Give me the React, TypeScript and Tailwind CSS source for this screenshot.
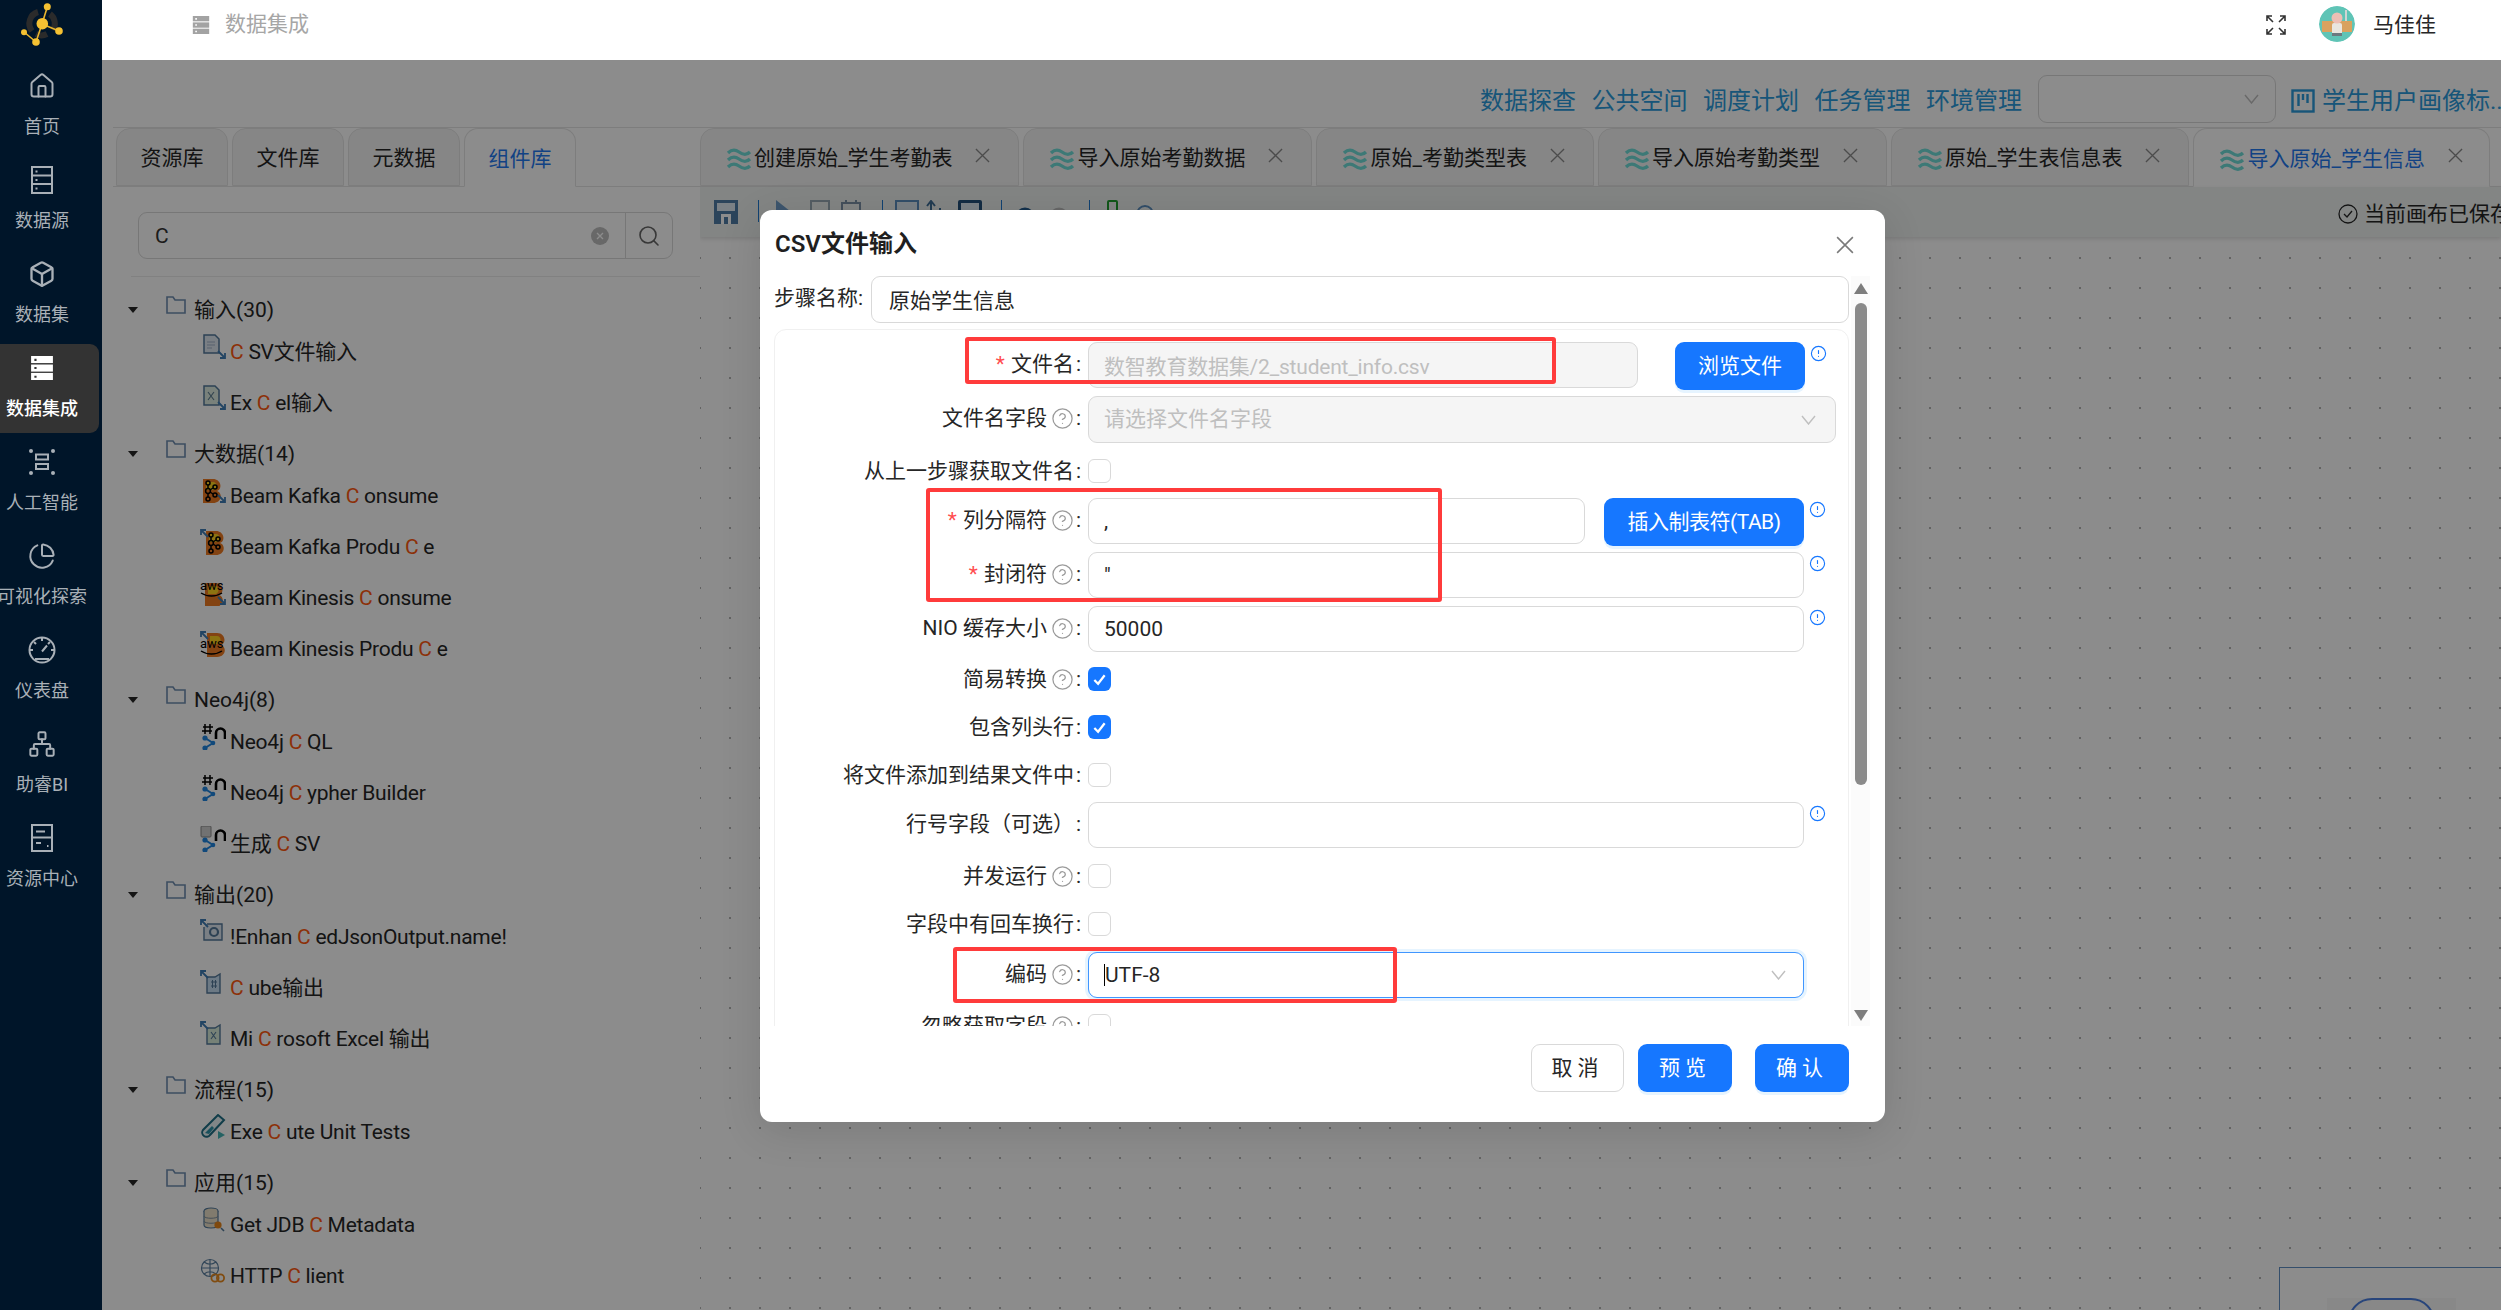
import type { ReactNode } from "react";
import { Box, ChartPie, CircleAlert, CircleHelp, Home, Network, Search } from "lucide-react";

function Cross({ className }: { className: string }) {
  return (
    <svg viewBox="0 0 16 16" className={className} fill="none" stroke="currentColor" strokeWidth="1.4">
      <path d="M1 1 15 15M15 1 1 15" />
    </svg>
  );
}

function Chevron() {
  return (
    <svg viewBox="0 0 15 10" className="h-[10px] w-[15px] shrink-0 text-[#bfbfbf]" fill="none" stroke="currentColor" strokeWidth="1.4">
      <path d="M1 1 7.5 9 14 1" />
    </svg>
  );
}

function Rows({ className, solid }: { className: string; solid?: boolean }) {
  const c = solid ? "#ffffff" : "#a3a3a3";
  return (
    <svg viewBox="0 0 22 24" className={className}>
      <rect x="1" y="1" width="20" height="6.5" fill={c} />
      <rect x="1" y="8.8" width="20" height="6.5" fill={c} />
      <rect x="1" y="16.5" width="20" height="6.5" fill={c} />
      <path d="M4 3.5h2v2H4zM4 11h2v2H4zM4 19h2v2H4z" fill={solid ? "#333333" : "#ffffff"} />
    </svg>
  );
}

function Logo() {
  return (
    <svg viewBox="0 0 102 60" className="h-[60px] w-[102px]">
      <path d="M32 31A12 12 0 0 1 38 12M50 14A12 12 0 0 1 53 30M47 34A12 12 0 0 1 36 34" fill="none" stroke="#2b2b2b" strokeWidth="6" />
      <path d="M42 24 47.3 7M42 24 59 31M42 24 36 42 24 32" fill="none" stroke="#e8b52e" strokeWidth="1.6" />
      <g fill="#f5c132">
        <circle cx="42.3" cy="23.7" r="5.8" />
        <circle cx="47.3" cy="6.7" r="3.5" />
        <circle cx="59" cy="31" r="3.8" />
        <circle cx="36" cy="42" r="3.8" />
        <circle cx="24" cy="32.3" r="3" />
      </g>
    </svg>
  );
}

const sideIcon = "h-[28px] w-[28px] text-[#a9b0b7]";

function SourceIcon() {
  return (
    <svg viewBox="0 0 28 28" className={sideIcon} fill="none" stroke="currentColor" strokeWidth="2">
      <rect x="4" y="1" width="20" height="26" />
      <path d="M4 9.5h20M4 18h20" />
      <path d="M7.5 5.5h2M7.5 14h2M7.5 22.5h2" />
    </svg>
  );
}

function AiIcon() {
  return (
    <svg viewBox="0 0 28 28" className={sideIcon} fill="none" stroke="currentColor" strokeWidth="2">
      <rect x="8" y="6.5" width="12" height="5" />
      <rect x="8" y="16" width="12" height="5" />
      <g fill="currentColor" stroke="none">
        <circle cx="3" cy="3" r="2" />
        <circle cx="25" cy="3" r="2" />
        <circle cx="3" cy="25" r="2" />
        <circle cx="25" cy="25" r="2" />
      </g>
    </svg>
  );
}

function CenterIcon() {
  return (
    <svg viewBox="0 0 28 28" className={sideIcon} fill="none" stroke="currentColor" strokeWidth="2">
      <rect x="4" y="1" width="20" height="26" />
      <path d="M4 13.5h20" />
      <path d="M8 7.5h9M8 19h5M19 22h1.5" />
    </svg>
  );
}

function DashIcon() {
  return (
    <svg viewBox="0 0 28 28" className={sideIcon} fill="none" stroke="currentColor" strokeWidth="2">
      <circle cx="14" cy="14" r="12.5" />
      <path d="M14 15.5 19 9.5M14 2v3M6 6l2 2M22 6l-2 2M2 14h3M26 14h-3M7 23h14" />
    </svg>
  );
}

const menu = [
  { label: "首页", icon: <Home className={sideIcon} strokeWidth={1.7} /> },
  { label: "数据源", icon: <SourceIcon /> },
  { label: "数据集", icon: <Box className={sideIcon} strokeWidth={2} /> },
  { label: "数据集成", icon: <Rows solid className="h-[28px] w-[24px]" />, active: true },
  { label: "人工智能", icon: <AiIcon /> },
  { label: "可视化探索", icon: <ChartPie className={sideIcon} strokeWidth={1.7} /> },
  { label: "仪表盘", icon: <DashIcon /> },
  { label: "助睿BI", icon: <Network className={sideIcon} strokeWidth={1.7} /> },
  { label: "资源中心", icon: <CenterIcon /> },
];

function Sidebar() {
  return (
    <aside className="flex w-[102px] shrink-0 flex-col bg-[#001529]">
      <div className="h-[62px]">
        <Logo />
      </div>
      {menu.map((m) => (
        <div
          key={m.label}
          className={
            m.active
              ? "mb-[5px] mr-[3px] flex h-[89px] flex-col items-center rounded-r-[9px] bg-[#333333] pr-[15px] pt-[10px]"
              : "mb-[5px] flex h-[89px] flex-col items-center pr-[18px] pt-[10px]"
          }
        >
          <div className="flex h-[28px] items-center justify-center">{m.icon}</div>
          <div
            className={
              m.active
                ? "mt-[14px] whitespace-nowrap text-[18px] font-medium leading-[26px] text-white"
                : "mt-[14px] whitespace-nowrap text-[18px] leading-[26px] text-[#a9b0b7]"
            }
          >
            {m.label}
          </div>
        </div>
      ))}
    </aside>
  );
}

function Avatar() {
  return (
    <svg viewBox="0 0 36 36" className="h-[36px] w-[36px] rounded-full">
      <circle cx="18" cy="18" r="18" fill="#5fc4b6" />
      <rect x="3" y="15" width="30" height="11" fill="#d9a25f" />
      <rect x="13" y="17" width="10" height="12" rx="2" fill="#e9e6df" />
      <rect x="13" y="27" width="10" height="3" fill="#6c7a80" />
      <circle cx="18" cy="12" r="5.5" fill="#eebfb4" />
      <rect x="26" y="4" width="2" height="11" fill="#cfd5d3" />
    </svg>
  );
}

function Header() {
  return (
    <header className="flex h-[60px] shrink-0 items-center bg-white pl-[90px] pr-[65px]">
      <Rows className="mb-[11px] h-[22px] w-[18px]" />
      <span className="mb-[13px] ml-[15px] text-[21px] leading-[30px] text-[#a6a6a6]">数据集成</span>
      <svg viewBox="0 0 20 20" className="mb-[10px] ml-auto h-[20px] w-[20px] text-[#333333]" fill="none" stroke="currentColor" strokeWidth="1.6">
        <path d="M7 7 1.5 1.5M1 6V1h5M13 7l5.5-5.5M14 1h5v5M7 13l-5.5 5.5M1 14v5h5M13 13l5.5 5.5M19 14v5h-5" />
      </svg>
      <div className="mb-[12px] ml-[33px]">
        <Avatar />
      </div>
      <span className="mb-[11px] ml-[18px] text-[21px] leading-[30px] text-[#262626]">马佳佳</span>
    </header>
  );
}

function TopNav() {
  return (
    <div className="flex h-[67px] shrink-0 items-center justify-end gap-[15.5px] pt-[14px] text-[24px] leading-[32px] text-[#2a9bdc]">
      <span>数据探查</span>
      <span>公共空间</span>
      <span>调度计划</span>
      <span>任务管理</span>
      <span>环境管理</span>
      <div className="mb-[3px] flex h-[48px] w-[238px] items-center justify-end rounded-[9px] border border-[#d9d9d9] bg-white pr-[16px]">
        <Chevron />
      </div>
      <div className="flex w-[210px] items-center gap-[7px] overflow-hidden whitespace-nowrap">
        <svg viewBox="0 0 24 24" className="h-[24px] w-[24px] shrink-0" fill="none" stroke="currentColor" strokeWidth="2.4">
          <rect x="1.5" y="1.5" width="21" height="21" />
          <path d="M7.5 5v12M12 5v6M16.5 5v9" />
        </svg>
        <span>学生用户画像标..</span>
      </div>
    </div>
  );
}

const DOC = "#53789a";

function SmallArrow({ up }: { up?: boolean }) {
  return up ? (
    <path d="M1 1 8 8M1 6V1h5" fill="none" stroke="#3f7cb4" strokeWidth="1.8" />
  ) : (
    <path d="M18 17 25 24M25 19v5h-5" fill="none" stroke="#3f7cb4" strokeWidth="1.8" />
  );
}

function Svg26({ children }: { children: ReactNode }) {
  return (
    <svg viewBox="0 0 26 26" className="h-[26px] w-[26px]">
      {children}
    </svg>
  );
}

function CsvIcon() {
  return (
    <Svg26>
      <path d="M4 1h11l4 4v14H4z" fill="#dfe7f0" stroke={DOC} strokeWidth="1.5" />
      <path d="M7 8h8M7 11h8M7 14h5" stroke="#9fb4c8" strokeWidth="1.2" />
      <SmallArrow />
    </Svg26>
  );
}

function ExcelIcon() {
  return (
    <Svg26>
      <path d="M4 1h11l4 4v15H4z" fill="#dcebe1" stroke={DOC} strokeWidth="1.5" />
      <path d="M8 7l6 8M14 7l-6 8" stroke="#5a7a8e" strokeWidth="1.1" />
      <SmallArrow />
    </Svg26>
  );
}

function BeamBack() {
  return (
    <>
      <path d="M3 1h10c8 0 10 10 4 12 6 2 5 12-4 12H3z" fill="#ef7b22" />
      <path d="M6 4h7c4 0 5 6 1 8H6z" fill="#ffd21f" />
    </>
  );
}

function KafkaNodes() {
  return (
    <g fill="none" stroke="#000000" strokeWidth="1.5">
      <circle cx="8" cy="5" r="2" />
      <circle cx="8" cy="13" r="2.4" />
      <circle cx="8" cy="21" r="2" />
      <circle cx="15" cy="9" r="2" />
      <circle cx="15" cy="17" r="2" />
      <path d="M8 7v4M8 15v4M10 12l3-2M10 14l3 2" />
    </g>
  );
}

function AwsMark() {
  return (
    <>
      <text x="0" y="10" fontSize="13" fill="#000000">aws</text>
      <path d="M1 13c6 4 15 4 21 0" fill="none" stroke="#000000" strokeWidth="1.4" />
    </>
  );
}

function KafkaIn() {
  return (
    <Svg26>
      <BeamBack />
      <KafkaNodes />
      <SmallArrow />
    </Svg26>
  );
}

function KafkaOut() {
  return (
    <Svg26>
      <g transform="translate(3 1)">
        <BeamBack />
        <KafkaNodes />
      </g>
      <SmallArrow up />
    </Svg26>
  );
}

function AwsIn() {
  return (
    <Svg26>
      <g transform="translate(2 2)">
        <BeamBack />
      </g>
      <AwsMark />
      <SmallArrow />
    </Svg26>
  );
}

function AwsOut() {
  return (
    <Svg26>
      <g transform="translate(4 1)">
        <BeamBack />
      </g>
      <g transform="translate(0 7)">
        <AwsMark />
      </g>
      <SmallArrow up />
    </Svg26>
  );
}

function NeoArch() {
  return (
    <>
      <path d="M16 15V9a4.5 4.5 0 0 1 9 0v6" fill="none" stroke="#000000" strokeWidth="2.6" />
      <path d="M5 14 13 19 5 24" fill="none" stroke="#1f86e0" strokeWidth="2" />
      <circle cx="5" cy="14" r="2.6" fill="#1f86e0" />
      <circle cx="13" cy="19" r="2.3" fill="#1f86e0" />
      <circle cx="5" cy="24" r="2.6" fill="#1f86e0" />
    </>
  );
}

function NeoHash() {
  return (
    <Svg26>
      <path d="M3 3h10M2 7h10M5 0v10M10 0v10" stroke="#000000" strokeWidth="1.5" />
      <NeoArch />
    </Svg26>
  );
}

function NeoCsv() {
  return (
    <Svg26>
      <rect x="1" y="0" width="10" height="11" rx="1" fill="#cfcfcf" stroke="#8a8a8a" />
      <NeoArch />
    </Svg26>
  );
}

function JsonOut() {
  return (
    <Svg26>
      <path d="M7 5h15v16H4V8" fill="#dfe7f0" stroke={DOC} strokeWidth="1.4" />
      <circle cx="14" cy="13" r="4" fill="none" stroke="#53789a" strokeWidth="2.2" />
      <SmallArrow up />
    </Svg26>
  );
}

function CubeOut() {
  return (
    <Svg26>
      <path d="M7 7h8l5-3v19H7z" fill="#c5dcf0" stroke={DOC} strokeWidth="1.4" />
      <path d="M11 12h6M11 16h6M12.5 10v8M15.5 10v8" stroke="#53789a" strokeWidth="1" />
      <SmallArrow up />
    </Svg26>
  );
}

function XlsOut() {
  return (
    <Svg26>
      <path d="M7 7h8l5-3v19H7z" fill="#d8ecd9" stroke={DOC} strokeWidth="1.4" />
      <path d="M11 11l5 7M16 11l-5 7" stroke="#53789a" strokeWidth="1.1" />
      <SmallArrow up />
    </Svg26>
  );
}

function TubeIcon() {
  return (
    <Svg26>
      <path d="M18 1 24 6 10 21a4 4 0 0 1-7-5z" fill="#eaf5f6" stroke="#1f6f86" strokeWidth="2" />
      <path d="M5 19 12 12l2 2-5 6z" fill="#2e93a8" />
      <path d="M18 17v8l7-4z" fill="#44b3b5" />
    </Svg26>
  );
}

function JdbIcon() {
  return (
    <Svg26>
      <ellipse cx="11" cy="4" rx="7" ry="3" fill="#ece0c8" stroke={DOC} strokeWidth="1.2" />
      <path d="M4 4v14c0 4 14 4 14 0V4" fill="#ece0c8" stroke={DOC} strokeWidth="1.2" />
      <path d="M4 9c0 3 14 3 14 0M4 14c0 3 14 3 14 0" fill="none" stroke="#7c8fa0" />
      <circle cx="18" cy="18" r="3.6" fill="#e8861a" />
      <path d="M21 21 24 24" stroke="#53789a" strokeWidth="1.6" />
    </Svg26>
  );
}

function HttpIcon() {
  return (
    <Svg26>
      <g fill="none" stroke="#5b7fa0" strokeWidth="1.2">
        <circle cx="10" cy="10" r="8.5" />
        <path d="M1.5 10h17M10 1.5v17M4 4c4 3 8 3 12 0M4 16c4-3 8-3 12 0" />
      </g>
      <g fill="none" stroke="#e98a1e" strokeWidth="1.8">
        <circle cx="15" cy="20" r="3.6" />
        <circle cx="20.5" cy="20" r="3.6" />
      </g>
    </Svg26>
  );
}

const tree: { group: string; items: { icon: ReactNode; pre: string; post: string }[] }[] = [
  {
    group: "输入(30)",
    items: [
      { icon: <CsvIcon />, pre: "", post: "SV文件输入" },
      { icon: <ExcelIcon />, pre: "Ex", post: "el输入" },
    ],
  },
  {
    group: "大数据(14)",
    items: [
      { icon: <KafkaIn />, pre: "Beam Kafka", post: "onsume" },
      { icon: <KafkaOut />, pre: "Beam Kafka Produ", post: "e" },
      { icon: <AwsIn />, pre: "Beam Kinesis", post: "onsume" },
      { icon: <AwsOut />, pre: "Beam Kinesis Produ", post: "e" },
    ],
  },
  {
    group: "Neo4j(8)",
    items: [
      { icon: <NeoHash />, pre: "Neo4j", post: "QL" },
      { icon: <NeoHash />, pre: "Neo4j", post: "ypher Builder" },
      { icon: <NeoCsv />, pre: "生成", post: "SV" },
    ],
  },
  {
    group: "输出(20)",
    items: [
      { icon: <JsonOut />, pre: "!Enhan", post: "edJsonOutput.name!" },
      { icon: <CubeOut />, pre: "", post: "ube输出" },
      { icon: <XlsOut />, pre: "Mi", post: "rosoft Excel 输出" },
    ],
  },
  { group: "流程(15)", items: [{ icon: <TubeIcon />, pre: "Exe", post: "ute Unit Tests" }] },
  {
    group: "应用(15)",
    items: [
      { icon: <JdbIcon />, pre: "Get JDB", post: "Metadata" },
      { icon: <HttpIcon />, pre: "HTTP", post: "lient" },
    ],
  },
];

function Tree() {
  return (
    <div className="pt-[16px] text-[21px] leading-[30px] text-[#262626]">
      {tree.map((g) => (
        <div key={g.group} className="mb-[9px]">
          <div className="flex h-[33px] items-center pl-[15px]">
            <svg viewBox="0 0 10 6" className="h-[6px] w-[10px]">
              <path d="M0 0h10L5 6z" fill="#262626" />
            </svg>
            <svg viewBox="0 0 20 18" className="mb-[10px] ml-[28px] h-[18px] w-[20px]" fill="none" stroke="#6f8db0" strokeWidth="1.6">
              <path d="M1 1h6l2 3h10v13H1z" />
            </svg>
            <span className="ml-[8px]">{g.group}</span>
          </div>
          {g.items.map((it) => (
            <div key={it.pre + it.post} className="flex h-[51px] items-center pl-[87px]">
              <div className="mb-[10px] h-[26px] w-[30px]">{it.icon}</div>
              <span className="whitespace-pre-wrap tracking-[-0.25px]">
                {it.pre}
                {it.pre ? " " : ""}
                <span className="text-[#ff5a12]">C</span> {it.post}
              </span>
            </div>
          ))}
        </div>
      ))}
    </div>
  );
}

function LeftPanel() {
  const tabs = ["资源库", "文件库", "元数据", "组件库"];
  return (
    <div className="ml-[11px] w-[587px] shrink-0 overflow-hidden border-t border-[#e4e4e4]">
      <div className="flex h-[59px] gap-[4px] border-b border-[#e4e4e4] pl-[3px]">
        {tabs.map((t) => (
          <div
            key={t}
            className={
              t === "组件库"
                ? "mb-[-1px] flex w-[112px] items-center justify-center rounded-t-[14px] border border-b-white border-[#e4e4e4] bg-white pt-[4px] text-[21px] text-[#1f78f0]"
                : "flex w-[112px] items-center justify-center rounded-t-[14px] border border-[#e4e4e4] bg-[#f5f5f5] pt-[4px] text-[21px] text-[#262626]"
            }
          >
            {t}
          </div>
        ))}
      </div>
      <div className="ml-[18px] border-b border-[#ececec] pb-[17px] pl-[7px] pt-[25px]">
        <div className="flex h-[47px] w-[535px] items-center rounded-[9px] border border-[#d9d9d9] bg-white">
          <span className="ml-[16px] flex-1 pt-[2px] text-[21px] text-[#333333]">C</span>
          <svg viewBox="0 0 18 18" className="mr-[16px] h-[18px] w-[18px]">
            <circle cx="9" cy="9" r="9" fill="#bdbdbd" />
            <path d="M6 6l6 6M12 6l-6 6" stroke="#ffffff" strokeWidth="1.4" />
          </svg>
          <div className="flex h-full w-[47px] items-center justify-center border-l border-[#d9d9d9]">
            <Search className="h-[24px] w-[24px] text-[#666666]" strokeWidth={1.6} />
          </div>
        </div>
      </div>
      <Tree />
    </div>
  );
}

function Wave() {
  return (
    <svg viewBox="0 0 26 26" className="h-[26px] w-[26px] shrink-0" fill="none" stroke="#6fdcd8" strokeWidth="3.2">
      <path d="M2 7c3-3 7-4 11-1s8 3 11 0" />
      <path d="M2 14c3-3 7-4 11-1s8 3 11 0" />
      <path d="M2 21c3-3 7-4 11-1s8 3 11 0" />
    </svg>
  );
}

function RightPanel() {
  const tabs = ["创建原始_学生考勤表", "导入原始考勤数据", "原始_考勤类型表", "导入原始考勤类型", "原始_学生表信息表", "导入原始_学生信息"];
  return (
    <div className="flex min-w-0 flex-1 flex-col overflow-hidden border-t border-[#e4e4e4]">
      <div className="flex h-[59px] shrink-0 gap-[4px] border-b border-[#e4e4e4]">
        {tabs.map((t, i) => (
          <div
            key={t}
            className={
              i === 5
                ? "mb-[-1px] flex shrink-0 items-center rounded-t-[14px] border border-b-white border-[#e4e4e4] bg-white pl-[25px] pr-[26px] pt-[4px] text-[21px] text-[#1f78f0]"
                : "flex shrink-0 items-center rounded-t-[14px] border border-[#e4e4e4] bg-[#f5f5f5] pl-[25px] pr-[28px] pt-[4px] text-[21px] text-[#262626]"
            }
          >
            <Wave />
            <span className="ml-[2px] whitespace-nowrap">{t}</span>
            <Cross className="mb-[8px] ml-[23px] h-[15px] w-[15px] text-[#8a8a8a]" />
          </div>
        ))}
      </div>
      <div className="flex h-[50px] shrink-0 items-start bg-[#eef3f1] pl-[14px] pt-[13px] shadow-[0_2px_4px_rgba(0,0,0,0.12)]">
        <svg viewBox="0 0 24 24" className="h-[24px] w-[24px]">
          <rect width="24" height="24" fill="#4f7ca6" />
          <rect x="3" y="3" width="18" height="8" fill="#dfe9f2" />
          <rect x="7" y="14" width="10" height="10" fill="#ffffff" />
          <rect x="10" y="17" width="4" height="7" fill="#4f7ca6" />
        </svg>
        <div className="ml-[20px] h-[22px] w-px bg-[#1f78d0]" />
        <svg viewBox="0 0 20 20" className="ml-[16px] h-[20px] w-[20px]">
          <path d="M1 0 20 15H1z" fill="#6f9cc6" />
        </svg>
        <div className="ml-[15px] h-[20px] w-[20px] border-2 border-[#9aa9b5]" />
        <svg viewBox="0 0 20 20" className="ml-[11px] h-[20px] w-[20px]" fill="none" stroke="#7d93a8" strokeWidth="2">
          <rect x="1" y="3" width="18" height="16" />
          <path d="M5 0v4M15 0v4" />
        </svg>
        <div className="ml-[21px] h-[22px] w-px bg-[#1f78d0]" />
        <div className="ml-[12px] h-[20px] w-[24px] border-2 border-[#5b8fc0] bg-[#dfe9f2]" />
        <svg viewBox="0 0 19 20" className="ml-[7px] h-[20px] w-[19px]" fill="none" stroke="#3f6d96" strokeWidth="2">
          <path d="M5 20V2M1 6l4-5 4 5M14 20V8" />
        </svg>
        <div className="ml-[13px] h-[22px] w-[24px] rounded-[2px] border-[3px] border-[#24507a] bg-[#dfe9f2]" />
        <div className="ml-[19px] h-[22px] w-px bg-[#1f78d0]" />
        <svg viewBox="0 0 20 20" className="ml-[13px] mt-[7px] h-[20px] w-[20px]" fill="none" stroke="#235a8c" strokeWidth="3">
          <path d="M2 10a8 8 0 0 1 16 0" />
        </svg>
        <svg viewBox="0 0 20 20" className="ml-[14px] mt-[7px] h-[20px] w-[20px]" fill="none" stroke="#bdbdbd" strokeWidth="3">
          <path d="M2 10a8 8 0 0 1 16 0" />
        </svg>
        <div className="ml-[20px] h-[22px] w-px bg-[#1f78d0]" />
        <div className="ml-[17px] h-[20px] w-[11px] rounded-[2px] border-2 border-[#1f9e2e]" />
        <svg viewBox="0 0 20 20" className="ml-[17px] h-[20px] w-[20px]" fill="none" stroke="#5b8fc0" strokeWidth="2">
          <path d="M2 14a8 8 0 0 1 16 0" />
        </svg>
        <div className="ml-auto mt-[2px] flex w-[163px] shrink-0 items-center overflow-hidden whitespace-nowrap text-[21px] leading-[24px] text-[#262626]">
          <svg viewBox="0 0 20 20" className="h-[20px] w-[20px] shrink-0" fill="none" stroke="#262626" strokeWidth="1.3">
            <circle cx="10" cy="10" r="9" />
            <path d="M6 10l3 3 5-6" />
          </svg>
          <span className="ml-[6px]">当前画布已保存</span>
        </div>
      </div>
      <div className="relative flex-1 bg-[radial-gradient(circle,#b5b5b5_1px,transparent_1.5px)] bg-[length:30px_30px] bg-[position:-15px_6px]">
        <div className="absolute bottom-0 right-0 h-[43px] w-[222px] overflow-hidden border-l border-t border-[#5f8fc4] bg-white pl-[47px] pt-[30px]">
          <div className="h-[20px] w-[129px] bg-[#f7f7f7] px-[21px]">
            <div className="h-[30px] w-[87px] rounded-t-[24px] border-2 border-[#4a7fe0]" />
          </div>
        </div>
      </div>
    </div>
  );
}

const fieldCls = "h-full rounded-[9px] border border-[#d9d9d9] px-[15px] text-[21px] outline-none";
const inputCls = `${fieldCls} bg-white text-[#262626]`;
const primaryBtn = "rounded-[9px] bg-[#1677ff] pt-[2px] text-[21px] text-white shadow-[0_3px_0_rgba(5,145,255,0.1)]";

function Info({ className }: { className: string }) {
  return <CircleAlert className={className} strokeWidth={1.6} />;
}

function FormRow({
  label,
  required,
  help,
  tall,
  mb,
  children,
}: {
  label: string;
  required?: boolean;
  help?: boolean;
  tall?: boolean;
  mb: string;
  children: ReactNode;
}) {
  return (
    <div className={`flex ${tall ? "h-[46px]" : "h-[24px]"} ${mb}`}>
      <div className={`flex w-[307px] shrink-0 items-center justify-end whitespace-nowrap ${tall ? "pb-[2px]" : ""} text-[21px] leading-[30px] text-[#262626]`}>
        {required && <span className="mr-[6px] text-[#ff4d4f]">*</span>}
        <span>{label}</span>
        {help && <CircleHelp className="ml-[4px] h-[23px] w-[23px] text-[#9a9a9a]" strokeWidth={1.3} />}
        <span className="ml-[2px] mr-[1px]">:</span>
      </div>
      <div className="ml-[6px] flex h-full min-w-0 flex-1">{children}</div>
    </div>
  );
}

function Checkbox({ checked }: { checked?: boolean }) {
  if (checked) {
    return (
      <div className="flex h-[24px] w-[23px] items-center justify-center rounded-[6px] bg-[#1677ff]">
        <svg viewBox="0 0 16 16" className="h-[15px] w-[15px]" fill="none" stroke="#ffffff" strokeWidth="2.4">
          <path d="M2.5 8.5 6.5 12.5 13.5 3.5" />
        </svg>
      </div>
    );
  }
  return <div className="h-[24px] w-[23px] rounded-[6px] border border-[#d9d9d9] bg-white" />;
}

function Form() {
  return (
    <div className="h-full overflow-hidden">
      <div className="mb-[6px] flex h-[47px] items-center">
        <span className="w-[97px] pb-[2px] text-[21px] text-[#262626]">步骤名称:</span>
        <input readOnly value="原始学生信息" className={`${inputCls} w-[978px] pb-[2px] pl-[17px]`} />
      </div>
      <div className="rounded-t-[12px] border border-[#f0f0f0] pt-[12px]">
        <FormRow label="文件名" required tall mb="mb-[8px]">
          <input disabled value="数智教育数据集/2_student_info.csv" className={`${fieldCls} w-[550px] bg-[#f5f5f5] tracking-[-0.2px] text-[#bfbfbf]`} />
          <button className={`${primaryBtn} ml-[37px] h-[48px] w-[130px]`}>浏览文件</button>
          <Info className="ml-[5px] mt-[3px] h-[17px] w-[17px] text-[#1677ff]" />
        </FormRow>
        <FormRow label="文件名字段" help tall mb="mb-[17px]">
          <div className="flex h-[47px] w-[748px] items-center justify-between rounded-[9px] border border-[#d9d9d9] bg-[#f5f5f5] pl-[15px] pr-[19px] text-[21px] text-[#bfbfbf]">
            请选择文件名字段
            <Chevron />
          </div>
        </FormRow>
        <FormRow label="从上一步骤获取文件名" mb="mb-[15px]">
          <Checkbox />
        </FormRow>
        <FormRow label="列分隔符" required help tall mb="mb-[8px]">
          <input readOnly value="," className={`${inputCls} w-[497px]`} />
          <button className={`${primaryBtn} ml-[19px] h-[48px] w-[200px] tracking-[-0.5px]`}>插入制表符(TAB)</button>
          <Info className="ml-[5px] mt-[3px] h-[17px] w-[17px] text-[#1677ff]" />
        </FormRow>
        <FormRow label="封闭符" required help tall mb="mb-[8px]">
          <input readOnly value={'"'} className={`${inputCls} w-[716px]`} />
          <Info className="ml-[5px] mt-[3px] h-[17px] w-[17px] text-[#1677ff]" />
        </FormRow>
        <FormRow label="NIO 缓存大小" help tall mb="mb-[15px]">
          <input readOnly value="50000" className={`${inputCls} w-[716px]`} />
          <Info className="ml-[5px] mt-[3px] h-[17px] w-[17px] text-[#1677ff]" />
        </FormRow>
        <FormRow label="简易转换" help mb="mb-[24px]">
          <Checkbox checked />
        </FormRow>
        <FormRow label="包含列头行" mb="mb-[24px]">
          <Checkbox checked />
        </FormRow>
        <FormRow label="将文件添加到结果文件中" mb="mb-[15px]">
          <Checkbox />
        </FormRow>
        <FormRow label="行号字段（可选）" tall mb="mb-[16px]">
          <input readOnly className={`${inputCls} w-[716px]`} />
          <Info className="ml-[5px] mt-[3px] h-[17px] w-[17px] text-[#1677ff]" />
        </FormRow>
        <FormRow label="并发运行" help mb="mb-[24px]">
          <Checkbox />
        </FormRow>
        <FormRow label="字段中有回车换行" mb="mb-[16px]">
          <Checkbox />
        </FormRow>
        <FormRow label="编码" help tall mb="mb-[16px]">
          <div className="flex w-[716px] items-center rounded-[9px] border border-[#4096ff] bg-white pl-[15px] pr-[17px] text-[21px] text-[#262626] shadow-[0_0_0_3px_rgba(5,145,255,0.1)]">
            <span className="h-[22px] w-px bg-[#000000]" />
            <span className="flex-1 pt-[2px]">UTF-8</span>
            <Chevron />
          </div>
        </FormRow>
        <FormRow label="忽略获取字段" help mb="mb-[16px]">
          <Checkbox />
        </FormRow>
      </div>
    </div>
  );
}

function ScrollBar() {
  return (
    <div className="ml-[2px] flex h-full w-[19px] shrink-0 flex-col items-center bg-[#fbfbfb]">
      <div className="flex h-[24px] items-center">
        <svg viewBox="0 0 14 11" className="h-[11px] w-[14px]">
          <path d="M7 0 14 11H0z" fill="#7d7d7d" />
        </svg>
      </div>
      <div className="mt-[3px] h-[482px] w-[12px] rounded-full bg-[#8a8a8a]" />
      <div className="mt-auto flex h-[22px] items-center">
        <svg viewBox="0 0 14 11" className="h-[11px] w-[14px]">
          <path d="M0 0h14L7 11z" fill="#7d7d7d" />
        </svg>
      </div>
    </div>
  );
}

function Modal() {
  return (
    <div className="relative ml-[658px] mt-[150px] h-[912px] w-[1125px] rounded-[12px] bg-white shadow-[0_9px_42px_rgba(0,0,0,0.12)]">
      <div className="flex h-[66px] items-center justify-between pl-[15px] pr-[31px]">
        <span className="mt-[2px] text-[24px] font-semibold leading-[32px] text-[#1f1f1f]">CSV文件输入</span>
        <Cross className="mt-[4px] h-[18px] w-[18px] text-[#7a7a7a]" />
      </div>
      <div className="ml-[14px] flex h-[750px]">
        <div className="w-[1075px] shrink-0">
          <Form />
        </div>
        <ScrollBar />
      </div>
      <div className="flex justify-end pr-[36px] pt-[18px] text-[21px]">
        <button className="h-[48px] w-[93px] rounded-[9px] border border-[#d9d9d9] bg-white pt-[2px] tracking-[5px] text-[#262626]">取消</button>
        <button className={`${primaryBtn} ml-[14px] h-[48px] w-[94px] tracking-[5px]`}>预览</button>
        <button className={`${primaryBtn} ml-[23px] h-[48px] w-[94px] tracking-[5px]`}>确认</button>
      </div>
      <div className="absolute left-[205px] top-[127px] h-[47px] w-[591px] rounded-[3px] border-[4px] border-[#ff3b3b]" />
      <div className="absolute left-[166px] top-[278px] h-[114px] w-[516px] rounded-[3px] border-[4px] border-[#ff3b3b]" />
      <div className="absolute left-[193px] top-[737px] h-[56px] w-[444px] rounded-[3px] border-[4px] border-[#ff3b3b]" />
    </div>
  );
}

export default function App() {
  return (
    <div className="flex h-[1310px] w-[2501px] overflow-hidden bg-white font-['Roboto','Noto_Sans_CJK_SC',sans-serif]">
      <Sidebar />
      <div className="flex min-w-0 flex-1 flex-col">
        <Header />
        <main className="relative flex min-h-0 flex-1 flex-col overflow-hidden">
          <TopNav />
          <div className="flex min-h-0 flex-1">
            <LeftPanel />
            <RightPanel />
          </div>
          <div className="absolute inset-0 bg-black/45">
            <Modal />
          </div>
        </main>
      </div>
    </div>
  );
}
